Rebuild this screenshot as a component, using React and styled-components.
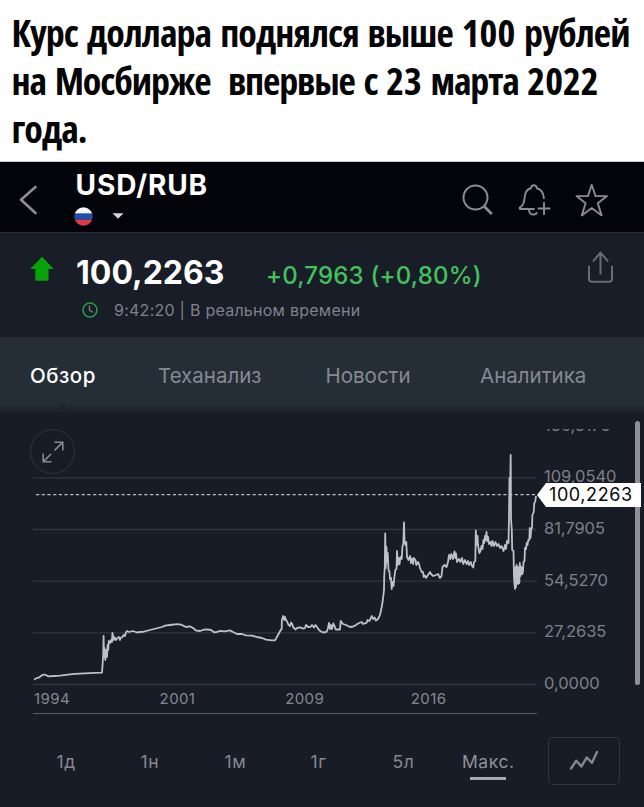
import React from "react";
import styled, { createGlobalStyle } from "styled-components";

const GlobalStyle = createGlobalStyle`
  * { box-sizing: border-box; }
  body { margin: 0; background: #181c26; font-family: Inter, "Liberation Sans", sans-serif; }
  svg { display: block; flex: none; }
`;

const Page = styled.div`
  width: 644px;
  height: 807px;
  overflow: hidden;
  display: flex;
  flex-direction: column;
  background: #181c26;
`;

const Caption = styled.header`
  height: 162px;
  flex: none;
  padding: 8px 0 0 11.5px;
  background: #fff;
  border-bottom: 1px solid #c9cacb;
`;

const CaptionLine = styled.div`
  height: 48px;
  font: 670 38px/48px "Open Sans", sans-serif;
  font-stretch: 75%;
  letter-spacing: ${(p) => p.$spacing}px;
  word-spacing: 3px;
  color: #050505;
  white-space: pre;
`;

const Digits = styled.span`
  font-stretch: 84%;
  letter-spacing: 0;
`;

const TopBar = styled.div`
  height: 71px;
  flex: none;
  display: flex;
  padding-left: 18px;
  background: #030409;
  border-bottom: 1px solid #292c35;
`;

const BackIcon = styled.svg`
  margin-top: 21px;
`;

const Instrument = styled.div`
  width: 386px;
  margin-left: 34px;
  padding-top: 6px;
`;

const Pair = styled.h1`
  margin: 0;
  padding-left: 1.5px;
  font-size: 28px;
  line-height: 34px;
  font-weight: 680;
  letter-spacing: 0.9px;
  color: #fff;
`;

const CurrencyPicker = styled.div`
  display: flex;
  align-items: center;
  gap: 19px;
  height: 20px;
  margin-top: 4px;
`;

const Actions = styled.div`
  display: flex;
  gap: 23.5px;
  padding-top: 20px;
`;

const Quote = styled.section`
  height: 104px;
  flex: none;
  display: flex;
  padding: 0 31px 0 30px;
  background: #191d28;
`;

const TrendArrow = styled.svg`
  margin-top: 23px;
`;

const QuoteBody = styled.div`
  flex: 1;
  padding: 20px 0 0 22px;
`;

const PriceRow = styled.div`
  display: flex;
  align-items: baseline;
  height: 40px;
`;

const Price = styled.span`
  width: 190px;
  font-size: 32px;
  line-height: 40px;
  font-weight: 700;
  letter-spacing: 0;
  color: #fff;
`;

const Change = styled.span`
  font-size: 24px;
  font-weight: 450;
  letter-spacing: 0.2px;
  color: #41c25c;
`;

const TimeRow = styled.div`
  display: flex;
  align-items: center;
  gap: 16px;
  height: 24px;
  margin-top: 5px;
  padding-left: 6px;
  font-size: 16px;
  letter-spacing: 0.25px;
  color: #7f828a;
`;

const ShareIcon = styled.svg`
  margin-top: 18px;
`;

const Tabs = styled.nav`
  height: 77px;
  flex: none;
  display: flex;
  padding-left: 30px;
  background: linear-gradient(#282d38 0, #252e37 12px, #252d36 66px, #202731 72px, #181c26 77px);
`;

const Tab = styled.span`
  position: relative;
  width: ${(p) => p.$width}px;
  line-height: 78px;
  font-size: 20.5px;
  font-weight: ${(p) => (p.$active ? 500 : 400)};
  letter-spacing: ${(p) => (p.$active ? 0.5 : 0)}px;
  color: ${(p) => (p.$active ? "#fff" : "#858a92")};
`;

const TabPointer = styled.i`
  position: absolute;
  left: 26px;
  bottom: 4px;
  width: 12px;
  height: 6px;
  background: #1c222c;
  clip-path: polygon(50% 0, 100% 100%, 0 100%);
`;

const ChartArea = styled.section`
  position: relative;
  height: 304px;
  flex: none;
  display: flex;
  padding-left: 33px;
`;

const ExpandButton = styled.button`
  position: absolute;
  left: 30px;
  top: 15px;
  width: 45px;
  height: 45px;
  padding: 0;
  display: grid;
  place-items: center;
  border: 1.5px solid #2f343e;
  border-radius: 50%;
  background: none;
`;

const Plot = styled.div`
  width: 504px;
  height: 300px;
  border-bottom: 1px solid #5a5d65;
`;

const Years = styled.div`
  display: flex;
  height: 24px;
  padding-left: 1px;
  font-size: 15px;
  line-height: 24px;
  letter-spacing: 0.4px;
  color: #85888f;
`;

const Year = styled.span`
  width: 125.6px;
`;

const Axis = styled.div`
  width: 98px;
  height: 289px;
  margin-top: 15px;
  padding-left: 7px;
  overflow: hidden;
`;

const AxisScale = styled.div`
  margin-top: -29.4px;
  font-size: 16.5px;
  line-height: 51.7px;
  color: #7d8087;
`;

const Tick = styled.div`
  height: 51.7px;
  letter-spacing: -0.05px;
`;

const Scrollbar = styled.div`
  width: 4.5px;
  height: 264px;
  margin-top: 7px;
  border-radius: 3px;
  background: #8e9096;
`;

const PriceTag = styled.div`
  position: absolute;
  left: 537px;
  top: 69px;
  width: 104px;
  height: 24px;
  padding-left: 12px;
  background: #fff;
  clip-path: polygon(0 50%, 9px 0, 100% 0, 100% 100%, 9px 100%);
  font-size: 18px;
  line-height: 24px;
  letter-spacing: 0.59px;
  color: #08090c;
`;

const RangeBar = styled.div`
  flex: 1;
  display: flex;
  align-items: flex-start;
  padding: 19px 0 0 56.5px;
`;

const Range = styled.span`
  width: ${(p) => p.$width}px;
  padding-top: 13px;
  display: flex;
  flex-direction: column;
  font-size: 17.5px;
  line-height: 24px;
  letter-spacing: 0.55px;
  color: ${(p) => (p.$active ? "#8f9298" : "#858890")};
`;

const Underline = styled.i`
  width: 36px;
  height: 3.5px;
  margin: 2.5px 0 0 8px;
  background: #a7a8ae;
`;

const ChartTypeButton = styled.button`
  width: 72px;
  height: 48px;
  padding: 0;
  display: grid;
  place-items: center;
  border: 1.5px solid #303640;
  border-radius: 5px;
  background: none;
`;

const GRID_LINES = [477.8, 529.5, 581.2, 632.8, 684.5];
const TICKS = ["136,3175", "109,0540", "81,7905", "54,5270", "27,2635", "0,0000"];
const YEARS = ["1994", "2001", "2009", "2016"];

const RATE = `34,679.5 37,678 39.3,677.3 42,675.3 44,674.5 46,675 48,676.3 54,676 60,675.6 68,674.7 75,673.8
  85,673.3 95,672.8 102,672.6 102.6,664 103.2,655 103.6,636 104,657 104.5,648 105.3,660 106,650 107,657
  107.6,645 108.2,650 108.8,641 110,643 111,640 112,642 112.4,633 113.2,636 114,640 115,637.5 116,640 117.5,638
  119,637 120,640 121,637.5 122.5,637 123.5,635 125,636 126,632.5 127,631 129,632 133,631 137,632.5 140,632
  143,631.8 150,630 158,628 162,627 165,625.6 170,625 175,624.3 178,624.1 181,624.6 186,627 190,626.3 193,628
  196,630.5 200,631 204,629.7 207,629.4 211,630 214,632.3 217,632 220,630.8 225,631.3 230,630.4 233,632
  237,634 242,634 246,635.3 252,635.7 257,637 262,638 266,639.6 272,640.4 275,640.4 278,635 280.7,630 281.7,629
  281.9,620 283.3,616 284.3,620 285,617 286,620 287.3,622 288.5,625 290,626 291,622.5 292.3,624 293,627
  295.7,629.5 297,628 300,627.3 303.3,628.7 305,628 306,625 308,627 310.7,626.8 312,625 314,627.5 315.5,625
  317,627 319,630 321,631.5 323,632.5 326.7,631.8 328,628 329,623 330,629 331,625 332,629 333.3,623.5 334.5,626
  335.7,629.5 340,629.5 340.7,621 343,624 346,625 350,627 353.3,626.5 356,625 358,623.5 361.7,622 363,624
  366.7,622.7 367.5,620 369.5,621 371.7,616 373,619 374.5,617.5 376,620.5 378,619 380,615 381.7,607
  382.7,601 384,590 384.2,577 384.8,567 385.2,533.5 385.8,568 386.4,547 387.2,562 387.7,553 388.5,570
  389.5,572 390,579 391,578 391.7,589 392.5,582 393.5,586 394.3,578 395.3,570 396.5,569 397,551 397.8,565
  398.5,558 399.5,564 400.5,557 401.7,559 402.5,546 403.3,544 404,522.5 404.5,541 405.5,545 406.3,542
  407,557 408.5,560 410,556 411,563 412,558.5 413.2,564 413.8,558 415.5,560 416.3,565 418,562 419,564
  420,568 421.7,572 423,572 423.7,577 425,575.5 426,578 428,575 430,572 431,574 433.3,576 436,575
  438,574 440,578 441.5,576 442.5,567 444.5,565 446.5,567 448,562 449,555 450.3,559 451.3,554 453,559 454.5,551.5
  455.5,558 456,553.5 457,562 459,559 460.5,562 462,558 463.3,564 465,560 466.5,564 468,561 469,565
  470.8,562 472,566 473.3,567.5 474,562 475.3,561 475.8,530.5 476.5,545 477.5,536 478,545 479.3,553
  480.5,551 481.5,546 482.5,549 483.5,540 484.3,543 485,536 485.7,540 486.5,532 487.2,541 488,537 489,544
  490.5,542 491.5,546 492.5,541 494,546 495.5,542 497,546 498.5,544 500,548 501.5,546 503.5,551 505,545
  506,549 507,541 508.5,543 509,519 509.5,478 510,500 510.7,455 511,519 511.8,530 512.2,550 513.5,551
  514,577 514.6,585 515,589 515.7,567 516,587 516.6,565 517,583 517.6,567 518.1,584 518.7,568 519.3,583
  519.8,563 520.5,576 521.4,567 522.4,574 523,571 523.5,562 524.5,561 525,548 526,549 526.7,543 527.5,545
  528.3,540 529.3,540 529.8,528 530.5,538 531.2,529 532,528 532.4,515 533.7,512 534.3,503 535.2,502 536,496`;

function BackChevron() {
  return (
    <BackIcon width="22" height="34" fill="none" stroke="#8d8e92" strokeWidth="2.6" strokeLinecap="round" strokeLinejoin="round">
      <path d="M17.5 4 3 16.8 17.5 30" />
    </BackIcon>
  );
}

function Flag() {
  return (
    <svg width="19" height="19" viewBox="0 0 19 19">
      <clipPath id="flag-round"><circle cx="9.5" cy="9.5" r="9.2" /></clipPath>
      <g clipPath="url(#flag-round)">
        <path fill="#f4f6fa" d="M0 0h19v6.8H0z" />
        <path fill="#1c4fae" d="M0 6.6h19v6.2H0z" />
        <path fill="#de3c45" d="M0 12.8h19V19H0z" />
      </g>
    </svg>
  );
}

function SearchIcon() {
  return (
    <svg width="34" height="34" fill="none" stroke="#8b8c90" strokeWidth="2">
      <circle cx="15.5" cy="15.5" r="12" />
      <path d="m23.8 24 8 8" strokeWidth="2.8" />
    </svg>
  );
}

function BellPlusIcon() {
  return (
    <svg width="34" height="34" fill="none" stroke="#8b8c90" strokeWidth="1.9" strokeLinecap="round" strokeLinejoin="round">
      <path d="M16 27H2C1.3 26.3 1.7 25.4 3 24.6c2.6-1.8 3.3-4.6 3.7-9.6.4-5 2.6-8 6.3-8.8.2-3.9 5.5-3.9 5.8 0C23.1 7.1 25.3 10.5 25.9 16.2" />
      <path d="M11 28.5c.5 4.7 6.3 5 7.7 2.5M26 20.8v11.4M20.5 26.5h11" />
    </svg>
  );
}

function StarIcon() {
  return (
    <svg width="36" height="36" fill="none" stroke="#8b8c90" strokeWidth="1.9" strokeLinejoin="round">
      <path d="m16.700 2.800 3.8 11.2 11.500.1-9.2 7.1 3.8 12.2-9.9-7.3-9.9 7.3 3.8-12.2L1.500 14.100l11.500-.1z" />
    </svg>
  );
}

function Clock() {
  return (
    <svg width="16" height="16" fill="none" strokeLinecap="round">
      <circle cx="8" cy="8" r="7" stroke="#279a45" strokeWidth="1.6" />
      <path d="M7.5 4v4.3l3.2 1.7" stroke="#6f7d7b" strokeWidth="1.4" />
    </svg>
  );
}

function RateChart() {
  return (
    <svg width="504" height="273" viewBox="33 414 504 273" fill="none">
      {GRID_LINES.map((y) => (
        <path key={y} d={`M33 ${y}H536.5`} stroke="#31353e" strokeWidth="1.3" />
      ))}
      <path d="M36 494.6H537" stroke="#b9bbc0" strokeWidth="1.3" strokeDasharray="3.2 2.5" />
      <polyline points={RATE} stroke="#bfc0c6" strokeWidth="1.8" strokeLinejoin="round" />
    </svg>
  );
}

export default function App() {
  return (
    <Page>
      <GlobalStyle />
      <Caption>
        <CaptionLine $spacing={-0.95}>Курс доллара поднялся выше <Digits>100</Digits> рублей</CaptionLine>
        <CaptionLine $spacing={-1.15}>{"на Мосбирже  впервые с "}<Digits>23</Digits> марта <Digits>2022</Digits></CaptionLine>
        <CaptionLine $spacing={-0.95}>года.</CaptionLine>
      </Caption>

      <TopBar>
        <BackChevron />
        <Instrument>
          <Pair>USD/RUB</Pair>
          <CurrencyPicker>
            <Flag />
            <svg width="12" height="6"><path d="M.5.3h11L6 5.8z" fill="#d5d6d8" /></svg>
          </CurrencyPicker>
        </Instrument>
        <Actions>
          <SearchIcon />
          <BellPlusIcon />
          <StarIcon />
        </Actions>
      </TopBar>

      <Quote>
        <TrendArrow width="24" height="26"><path d="M12 .7 23.7 13H18.5V24.7H5.3V13H.3z" fill="#07a207" /></TrendArrow>
        <QuoteBody>
          <PriceRow>
            <Price>100,2263</Price>
            <Change>+0,7963 (+0,80%)</Change>
          </PriceRow>
          <TimeRow>
            <Clock />
            9:42:20 | В реальном времени
          </TimeRow>
        </QuoteBody>
        <ShareIcon width="25" height="33" fill="none" stroke="#696c78" strokeWidth="2" strokeLinecap="round" strokeLinejoin="round">
          <path d="M1 15.5V28q0 2.7 2.7 2.7h17.6q2.7 0 2.7-2.7V15.5M12.5 22.5V2M5.5 9.8l7-8.2 7 8.2" />
        </ShareIcon>
      </Quote>

      <Tabs>
        <Tab $width={128} $active>Обзор<TabPointer /></Tab>
        <Tab $width={167.5}>Теханализ</Tab>
        <Tab $width={154.5}>Новости</Tab>
        <Tab $width={110}>Аналитика</Tab>
      </Tabs>

      <ChartArea>
        <Plot>
          <RateChart />
          <Years>
            {YEARS.map((year) => <Year key={year}>{year}</Year>)}
          </Years>
        </Plot>
        <Axis>
          <AxisScale>
            {TICKS.map((tick) => <Tick key={tick}>{tick}</Tick>)}
          </AxisScale>
        </Axis>
        <Scrollbar />
        <PriceTag>100,2263</PriceTag>
        <ExpandButton aria-label="Развернуть">
          <svg width="24" height="24" fill="none" stroke="#858990" strokeWidth="1.6">
            <path d="M13.5 2.2h8.3v8.3M21.6 2.4l-8 8M2.2 13.5v8.3h8.3M2.4 21.6l7.6-7.6" />
          </svg>
        </ExpandButton>
      </ChartArea>

      <RangeBar>
        <Range $width={84}>1д</Range>
        <Range $width={84}>1н</Range>
        <Range $width={86}>1м</Range>
        <Range $width={82}>1г</Range>
        <Range $width={69.5}>5л</Range>
        <Range $width={86} $active>Макс.<Underline /></Range>
        <ChartTypeButton aria-label="Тип графика">
          <svg width="30" height="22" fill="none" stroke="#85878e" strokeWidth="2.4" strokeLinejoin="round" strokeLinecap="round">
            <path d="m2 18.5 5.3-7.8 5 5.8 5.5-9 5.2 5.3L28 2" />
          </svg>
        </ChartTypeButton>
      </RangeBar>
    </Page>
  );
}
